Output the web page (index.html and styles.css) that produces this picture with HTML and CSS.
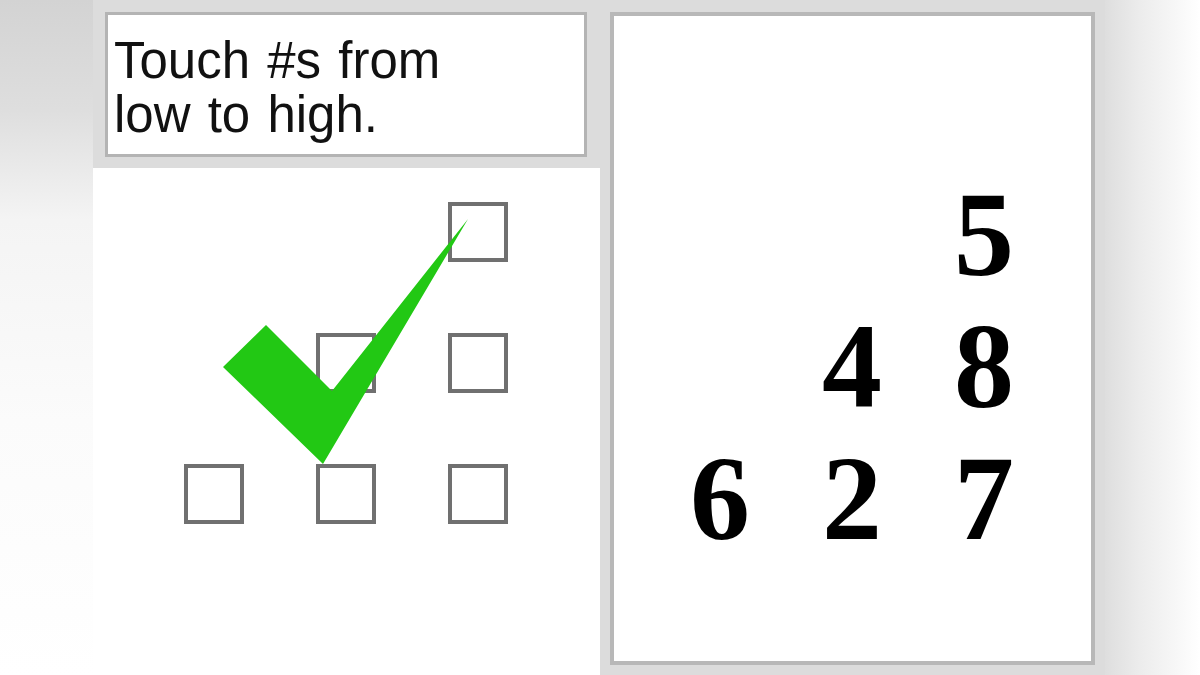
FILE: index.html
```html
<!DOCTYPE html>
<html lang="en">
<head>
  <meta charset="UTF-8" />
  <meta name="viewport" content="width=device-width, initial-scale=1.0"/>
  <title>Touch #s from low to high</title>
  <link rel="stylesheet" href="styles.css">
</head>
<body>
  <div class="side side-left"></div>

  <div class="console">
    <div class="touch-screen">
      <div class="prompt-bar">
        <div class="prompt">Touch #s from<br>low to high.</div>
      </div>

      <div class="touch-area">
        <div class="box-grid">
          <span class="cell"></span>
          <span class="cell"></span>
          <span class="cell box"></span>
          <span class="cell"></span>
          <span class="cell box"></span>
          <span class="cell box"></span>
          <span class="cell box"></span>
          <span class="cell box"></span>
          <span class="cell box"></span>
        </div>
        <!-- answer mark drawn over the boxes -->
        <svg class="check" viewBox="0 0 507 507" width="507" height="507">
          <polygon points="130,199 173,157 239,223 375,51 230,296" fill="#22c814"/>
        </svg>
      </div>
    </div>

    <div class="number-panel">
      <div class="numbers">
        <span class="num"></span>
        <span class="num"></span>
        <span class="num">5</span>
        <span class="num"></span>
        <span class="num">4</span>
        <span class="num">8</span>
        <span class="num">6</span>
        <span class="num">2</span>
        <span class="num">7</span>
      </div>
    </div>
  </div>

  <div class="side side-right"></div>
</body>
</html>
```

FILE: styles.css
```css
body {
  margin: 0;
  padding: 0;
  width: 1200px;
  height: 675px;
  overflow: hidden;
  display: flex;
  background: #fff;
  font-family: 'Liberation Sans', Arial, sans-serif;
}

.side {
  height: 100%;
}

.side-left {
  width: 93px;
  background: linear-gradient(to bottom, #d3d3d3 0, #dedede 110px, #f4f4f4 220px, #fbfbfb 420px, #fff 100%);
}

.side-right {
  width: 95px;
  background: linear-gradient(to right, #dedede 0, #ececec 35px, #fafafa 80px, #fff 100%);
}

.console {
  width: 1012px;
  height: 675px;
  display: flex;
  background: #dcdcdc;
}

.touch-screen {
  width: 507px;
  display: flex;
  flex-direction: column;
}

.prompt-bar {
  height: 168px;
  box-sizing: border-box;
  padding: 12px 13px 11px 12px;
}

.prompt {
  height: 145px;
  box-sizing: border-box;
  border: 3px solid #b4b4b4;
  background: #fff;
  padding: 19px 0 0 6px;
  font-size: 51px;
  line-height: 54px;
  word-spacing: 3px;
  color: #111;
}

.touch-area {
  flex: 1;
  position: relative;
  background: #fff;
}

.box-grid {
  display: grid;
  grid-template-columns: repeat(3, 60px);
  grid-auto-rows: 60px;
  gap: 71px 72px;
  padding: 34px 0 0 91px;
}

.box {
  box-sizing: border-box;
  border: 4px solid #707070;
}

.check {
  position: absolute;
  top: 0;
  left: 0;
}

.number-panel {
  width: 485px;
  height: 653px;
  box-sizing: border-box;
  margin: 12px 10px 10px 10px;
  border: 4px solid #b8b8b8;
  background: #fff;
}

.numbers {
  display: grid;
  grid-template-columns: repeat(3, 132px);
  grid-auto-rows: 132px;
  padding: 153px 0 0 40px;
}

.num {
  font-family: 'Liberation Serif', 'Times New Roman', serif;
  font-weight: bold;
  font-size: 120px;
  line-height: 132px;
  text-align: center;
  color: #000;
}
```
